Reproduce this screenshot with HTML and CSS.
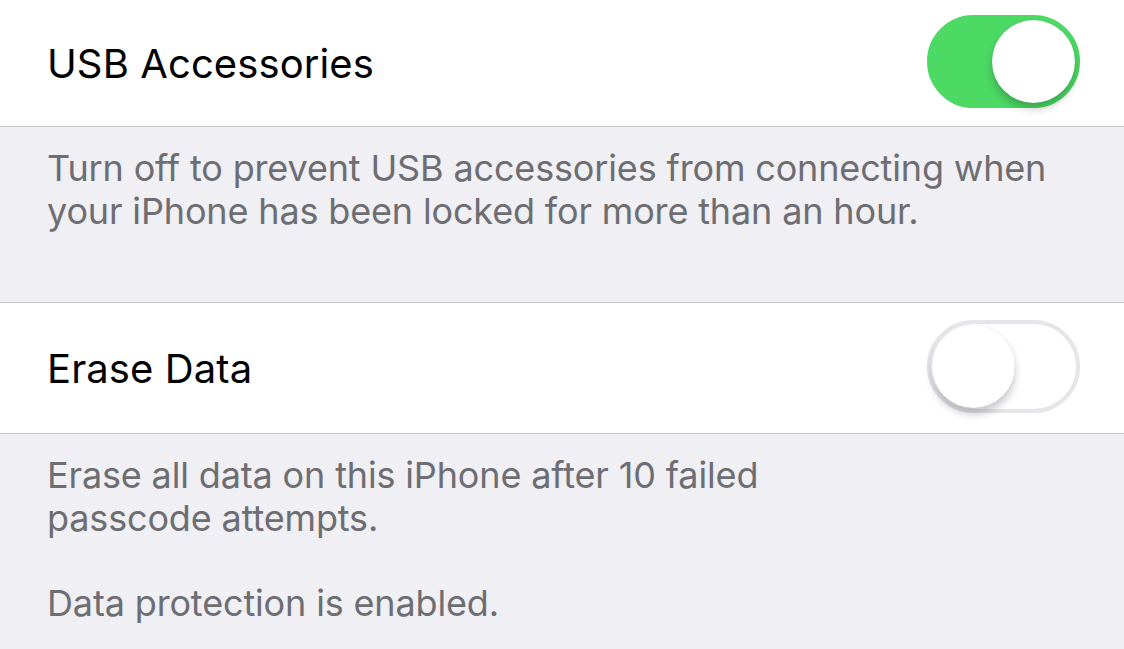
FILE: index.html
```html
<!DOCTYPE html>
<html lang="en">
<head>
  <meta charset="UTF-8" />
  <meta name="viewport" content="width=device-width, initial-scale=1.0"/>
  <title>Settings - USB Accessories</title>
  <link rel="stylesheet" href="styles.css">
</head>
<body>
  <div class="cell">
    <span class="cell-label">USB Accessories</span>
    <label class="switch">
      <input type="checkbox" checked>
      <span class="track"><span class="knob"></span></span>
    </label>
  </div>
  <p class="footer footer-first">Turn off to prevent USB accessories from connecting when your iPhone has been locked for more than an hour.</p>

  <div class="cell cell-top">
    <span class="cell-label">Erase Data</span>
    <label class="switch">
      <input type="checkbox">
      <span class="track"><span class="knob"></span></span>
    </label>
  </div>
  <p class="footer">Erase all data on this iPhone after 10 failed<br>passcode attempts.<br><br>Data protection is enabled.</p>
</body>
</html>
```

FILE: styles.css
```css
body {
  margin: 0;
  background: #efeff4;
  font-family: Inter, "Noto Sans", sans-serif;
}

.cell {
  height: 127px;
  box-sizing: border-box;
  background: #fff;
  border-bottom: 1px solid #c8c7cc;
  padding: 0 44px 0 47px;
  display: flex;
  align-items: center;
  justify-content: space-between;
}
.cell-top {
  height: 132px;
  border-top: 1px solid #c8c7cc;
}
.cell-label {
  font-size: 40px;
  color: #000;
  letter-spacing: 0.1px;
}

.switch {
  position: relative;
  display: block;
  margin-top: -4px;
}
.switch input {
  display: none;
}
.track {
  display: block;
  width: 153px;
  height: 93px;
  box-sizing: border-box;
  border-radius: 47px;
  border: 4px solid #e5e5ea;
  background: #fff;
}
.knob {
  position: absolute;
  top: 5px;
  left: 5px;
  width: 83px;
  height: 83px;
  border-radius: 50%;
  background: #fff;
  box-shadow: 0 6px 9px rgba(0,0,0,0.22), 0 0 1px rgba(0,0,0,0.15);
}
.switch input:checked + .track {
  background: #4cd964;
  border-color: #4cd964;
}
.switch input:checked + .track .knob {
  left: 65px;
}

.footer {
  margin: 0;
  padding: 20px 60px 70px 47px;
  font-size: 36px;
  line-height: 42.5px;
  letter-spacing: -0.15px;
  color: #6d6d72;
}
.footer-first {
  padding-bottom: 70px;
}
```
